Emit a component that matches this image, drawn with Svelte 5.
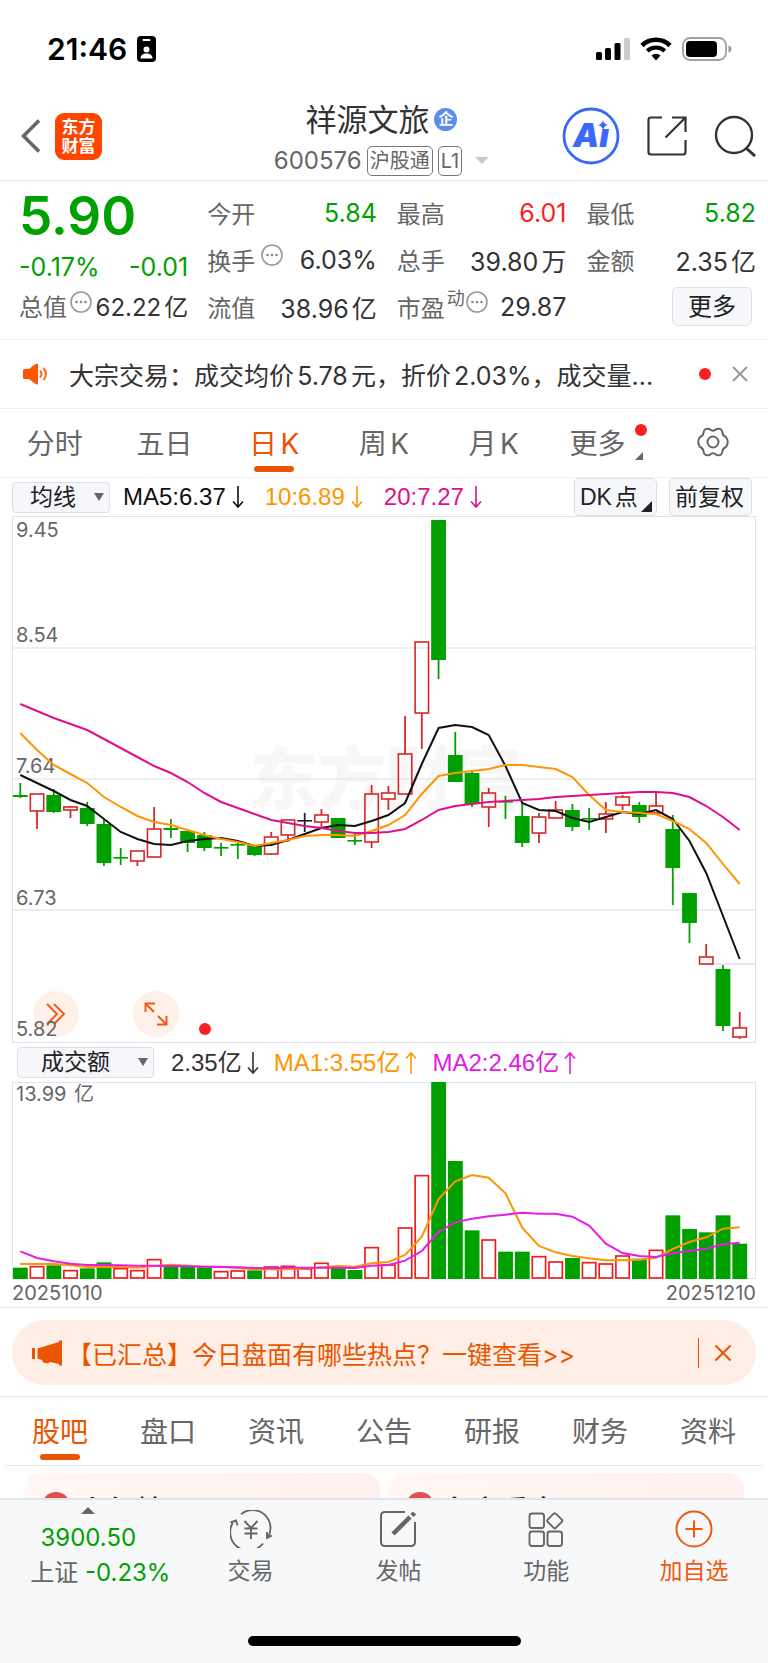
<!-- Stock detail page: quote, daily K chart, volume -->
<script>
  const quotes = [
    { label: '今开', value: '5.84', tone: 'down' },
    { label: '最高', value: '6.01', tone: 'up' },
    { label: '最低', value: '5.82', tone: 'down' },
    { label: '换手', value: '6.03%', info: true },
    { label: '总手', value: '39.80万' },
    { label: '金额', value: '2.35亿' },
    { label: '流值', value: '38.96亿' },
    { label: '市盈', sup: '动', value: '29.87', info: true }
  ];

  const periods = ['分时', '五日', '日K', '周K', '月K'];
  const sections = ['股吧', '盘口', '资讯', '公告', '研报', '财务', '资料'];
  let period = $state('日K');
  let section = $state('股吧');
  let showNotice = $state(true);
  let showBanner = $state(true);

  // colour (g/r/k), high, body top, body bottom, low
  const candles = [
    ['g', 267, 279, 281, 282], ['r', 278, 278, 295, 313], ['g', 273, 279, 296, 297],
    ['r', 290, 291, 294, 302], ['g', 286, 292, 308, 310], ['g', 304, 308, 347, 350],
    ['g', 332, 341, 342, 349], ['r', 335, 335, 345, 350], ['r', 291, 313, 341, 341],
    ['g', 303, 312, 314, 322], ['g', 315, 315, 327, 336], ['g', 316, 319, 332, 335],
    ['g', 327, 331, 332, 340], ['g', 327, 328, 329, 343], ['g', 329, 329, 339, 340],
    ['r', 316, 321, 338, 339], ['r', 304, 304, 319, 326], ['k', 297, 304, 305, 316],
    ['r', 293, 299, 306, 313], ['g', 302, 302, 322, 322], ['g', 318, 324, 325, 329],
    ['r', 269, 278, 326, 332], ['r', 270, 277, 283, 294], ['r', 200, 238, 278, 278],
    ['r', 126, 126, 197, 233], ['g', 4, 4, 144, 163], ['g', 216, 239, 266, 266],
    ['g', 255, 257, 288, 291], ['r', 272, 277, 291, 311], ['g', 280, 285, 286, 303],
    ['g', 287, 300, 327, 331], ['r', 297, 301, 317, 327], ['r', 285, 294, 302, 302],
    ['g', 288, 294, 311, 315], ['g', 292, 302, 303, 314], ['r', 286, 298, 303, 317],
    ['r', 279, 281, 289, 294], ['g', 286, 289, 301, 307], ['r', 276, 290, 297, 297],
    ['g', 299, 313, 352, 389], ['g', 377, 377, 407, 427], ['r', 428, 441, 448, 448],
    ['g', 449, 453, 510, 515], ['r', 496, 512, 521, 523]
  ];
  const ma5 = [259, 267, 275, 284, 290, 303, 316, 323, 328, 329, 325, 323, 322, 325, 330, 329, 324, 318, 312, 309, 310, 305, 299, 287, 248, 212, 209, 211, 219, 250, 287, 294, 295, 302, 306, 301, 296, 298, 294, 303, 325, 357, 400, 443];
  const ma10 = [217, 234, 249, 258, 267, 281, 291, 300, 306, 309, 314, 319, 323, 326, 330, 327, 324, 320, 319, 319, 320, 315, 309, 299, 278, 260, 257, 255, 253, 249, 249, 251, 253, 261, 279, 294, 296, 297, 298, 305, 313, 327, 348, 368];
  const ma20 = [188, 195, 202, 208, 214, 223, 232, 241, 250, 257, 266, 277, 286, 292, 298, 304, 307, 310, 312, 315, 317, 317, 316, 313, 304, 294, 290, 288, 286, 285, 284, 283, 281, 280, 279, 278, 277, 276, 276, 277, 281, 290, 301, 314];

  const volumes = [34, 39, 41, 27, 32, 50, 33, 27, 60, 38, 37, 36, 24, 26, 26, 38, 40, 32, 49, 33, 27, 96, 44, 155, 312, 591, 354, 146, 119, 82, 82, 69, 53, 63, 51, 47, 71, 61, 88, 191, 150, 140, 191, 106];
  // volume colour follows the previous close, not the open
  const volTone = 'grgrggrrrgggrrgrrrrggrrrrgggrggrrgrrrgrggggg';
  const volMa1 = [45, 45, 45, 41, 36, 36, 36, 34, 39, 43, 40, 37, 37, 33, 29, 29, 29, 31, 35, 39, 37, 47, 51, 72, 127, 240, 293, 312, 304, 257, 154, 99, 80, 69, 62, 56, 56, 58, 64, 90, 111, 125, 151, 155];
  const volMa2 = [83, 63, 53, 46, 42, 42, 41, 40, 40, 39, 38, 37, 36, 35, 33, 32, 34, 34, 34, 34, 33, 40, 42, 55, 84, 141, 170, 181, 188, 193, 199, 196, 196, 187, 160, 106, 78, 69, 66, 77, 84, 91, 104, 109];

  const axis = [['9.45', 21], ['8.54', 126], ['7.64', 257], ['6.73', 389], ['5.82', 520]];
  const colors = { g: '#00a000', r: '#d5282c', k: '#222' };

  const cx = (i) => 8.3 + i * 16.73;
  const line = (arr) => arr.map((y, i) => `${cx(i).toFixed(1)},${y}`).join(' ');
  // the volume pane is drawn at three units per price pane unit
  const volLine = (arr) => arr.map((v, i) => `${(cx(i) * 3).toFixed(1)},${591 - v}`).join(' ');
</script>

{#snippet info()}
  <svg class="info" viewBox="0 0 22 22" aria-hidden="true">
    <circle cx="11" cy="11" r="10" fill="none" stroke="#999" stroke-width="1.6" />
    <circle cx="6.5" cy="11" r="1.3" fill="#888" />
    <circle cx="11" cy="11" r="1.3" fill="#888" />
    <circle cx="15.5" cy="11" r="1.3" fill="#888" />
  </svg>
{/snippet}

{#snippet arrow(up)}
  <svg class="arrow" viewBox="0 0 12 24" aria-hidden="true">
    <path d={up ? 'M6 23V2M1 7.5L6 2l5 5.5' : 'M6 1v21M1 16.5L6 22l5-5.5'} fill="none" stroke="currentColor" stroke-width="1.6" />
  </svg>
{/snippet}

<div class="page">
  <div class="status">
    <div class="clock">
      <span>21:46</span>
      <svg width="20" height="26" viewBox="0 0 20 26" aria-hidden="true">
        <rect width="19" height="26" rx="4" fill="#000" />
        <rect x="5.5" y="3" width="8" height="2" rx="1" fill="#fff" />
        <circle cx="9.5" cy="13.5" r="3" fill="#fff" />
        <path d="M3.5 22.5c0-3.5 2.5-5 6-5s6 1.5 6 5z" fill="#fff" />
      </svg>
    </div>
    <div class="signals">
      <svg width="34" height="24" viewBox="0 0 34 24" aria-hidden="true">
        <rect x="0" y="15" width="6" height="8" rx="1.5" />
        <rect x="9" y="11" width="6" height="12" rx="1.5" />
        <rect x="18.5" y="6" width="6" height="17" rx="1.5" />
        <rect x="28" y="1" width="6" height="22" rx="1.5" fill="#ccc" />
      </svg>
      <svg width="32" height="24" viewBox="0 0 32 24" aria-hidden="true">
        <path d="M2 8.5a20 20 0 0 1 28 0" fill="none" stroke="#000" stroke-width="4.6" />
        <path d="M7.3 14a12.5 12.5 0 0 1 17.4 0" fill="none" stroke="#000" stroke-width="4.2" />
        <path d="M11.5 18.5q4.5-3.6 9 0L16 23.5z" />
      </svg>
      <svg width="50" height="24" viewBox="0 0 50 24" aria-hidden="true">
        <rect x="1" y="1" width="43" height="22" rx="7" fill="none" stroke="#a0a0a0" stroke-width="1.8" />
        <rect x="4" y="4" width="31" height="16" rx="4" />
        <path d="M46.5 8.5q3 1 3 3.5t-3 3.5z" fill="#999" />
      </svg>
    </div>
  </div>

  <header>
    <div class="left">
      <button class="icon" aria-label="返回">
        <svg width="20" height="34" viewBox="0 0 20 34"><path d="M18 1.5L2.5 17 18 32.5" fill="none" stroke="#666" stroke-width="3.6" /></svg>
      </button>
      <a class="logo" href="#home">东方<br />财富</a>
    </div>
    <div class="stock">
      <h1>祥源文旅<span class="badge">企</span></h1>
      <div class="code">
        <span>600576</span>
        <span class="tag">沪股通</span>
        <span class="tag">L1</span>
        <i class="caret"></i>
      </div>
    </div>
    <div class="actions">
      <button class="icon" aria-label="智能助手">
        <svg width="58" height="58" viewBox="0 0 58 58">
          <circle cx="29" cy="29" r="27" fill="#fff" stroke="#3a68ff" stroke-width="2.8" />
          <text x="11" y="40" class="ai">Aı</text>
          <path d="M41 13q1 4.2 5 5-4 1-5 5-1-4-5-5 4-.8 5-5z" fill="#3a68ff" />
        </svg>
      </button>
      <button class="icon" aria-label="分享">
        <svg width="42" height="42" viewBox="0 0 42 42" fill="none" stroke="#333" stroke-width="2.2">
          <path d="M16 2.5H5q-2.5 0-2.5 2.5v32q0 2.5 2.5 2.5h32q2.5 0 2.5-2.5V25" />
          <path d="M26 2.5h13.5V17M39.5 2.5l-20 20" />
        </svg>
      </button>
      <button class="icon" aria-label="搜索">
        <svg width="42" height="42" viewBox="0 0 42 42" fill="none" stroke="#333" stroke-width="2.4">
          <circle cx="20" cy="20" r="18" />
          <path d="M32 33l9 8" stroke-width="3" />
        </svg>
      </button>
    </div>
  </header>

  <section class="quote">
    <div class="main down">
      <strong>5.90</strong>
      <p class="pair"><span>-0.17%</span><span>-0.01</span></p>
      <p class="pair total">
        <span class="label">总值</span>{@render info()}<span class="dark">62.22亿</span>
      </p>
    </div>
    <div class="cells">
      {#each quotes as q}
        <div class="cell">
          <span class="label">{q.label}{#if q.sup}<sup>{q.sup}</sup>{/if}{#if q.info}{@render info()}{/if}</span>
          <span class="num {q.tone || 'dark'}">{q.value}</span>
        </div>
      {/each}
      <div class="cell end"><button class="more">更多</button></div>
    </div>
  </section>

  {#if showNotice}
    <section class="notice">
      <svg width="26" height="22" viewBox="0 0 26 22" aria-hidden="true">
        <path d="M1 7.5Q1 6 2.5 6H7l6.5-5q2.5-1.5 2.5 1v18q0 2.500-2.500 1L7 16H2.500Q1 16 1 14.500z" fill="#ff5500" />
        <path d="M18 7.5q3 3.5 0 7M21.5 5q5 6 0 12" fill="none" stroke="#ff6a20" stroke-width="2" />
      </svg>
      <a href="#notice">大宗交易：成交均价5.78元，折价2.03%，成交量...</a>
      <i class="dot"></i>
      <button class="icon" aria-label="关闭公告" onclick={() => (showNotice = false)}>
        <svg width="16" height="16" viewBox="0 0 16 16"><path d="M1 1l14 14M15 1L1 15" stroke="#999" stroke-width="2" /></svg>
      </button>
    </section>
  {/if}

  <nav class="tabs periods">
    {#each periods as p}
      <button class:active={period === p} onclick={() => (period = p)}>{p}</button>
    {/each}
    <button><span class="more-tab">更多<i class="dot"></i><i class="corner"></i></span></button>
    <button aria-label="设置">
      <svg width="32" height="30" viewBox="0 0 32 30" fill="none" stroke="#666" stroke-width="2">
        <path d="M12.5 2Q16 5.5 19.5 2Q25 .5 25.5 6Q26 9 29 10Q32.5 15 29 20Q26 21 25.5 24Q25 29.5 19.5 28Q16 24.5 12.5 28Q7 29.5 6.5 24Q6 21 3 20Q-.5 15 3 10Q6 9 6.5 6Q7 .5 12.5 2z" />
        <circle cx="16" cy="15" r="5.5" />
      </svg>
    </button>
  </nav>

  <div class="legend">
    <label class="pick">
      <select aria-label="主图指标"><option>均线</option><option>BOLL</option></select>
      <i></i>
    </label>
    <span class="ma">MA5:6.37{@render arrow(false)}</span>
    <span class="ma orange">10:6.89{@render arrow(false)}</span>
    <span class="ma pink">20:7.27{@render arrow(false)}</span>
    <div class="opts">
      <button class="opt">DK点<i class="corner"></i></button>
      <button class="opt">前复权</button>
    </div>
  </div>

  <div class="pane">
    <div class="tools">
      <button aria-label="展开">
        <svg width="20" height="22" viewBox="0 0 20 22"><path d="M1 1l10 10L1 21M8 1l10 10L8 21" fill="none" stroke="#f05a10" stroke-width="1.9" /></svg>
      </button>
      <button aria-label="全屏">
        <svg width="24" height="24" viewBox="0 0 24 24"><path d="M1.5 10V1.5H11M1.5 1.5L10 10M22.5 14v8.5H13M22.5 22.5L14 14" fill="none" stroke="#f05a10" stroke-width="1.9" /></svg>
      </button>
      <i class="dot"></i>
    </div>
    <svg class="chart" viewBox="0 0 744 527" role="img" aria-label="日K线">
      <text x="238" y="288" class="watermark">东方财富</text>
      {#each [132, 263, 394] as y}
        <line x1="0" x2="744" y1={y} y2={y} stroke="#e6e9ef" stroke-width="1.5" />
      {/each}
      <line x1={cx(41)} x2="744" y1="448" y2="448" stroke="#dcdfe6" stroke-width="1.3" />
      {#each axis as [label, y]}
        <text x="4" {y} class="axis">{label}</text>
      {/each}
      {#each candles as [c, high, top, bottom, low], i}
        {#if c === 'r'}
          <path d="M{cx(i)} {high}V{top}M{cx(i)} {bottom}V{low}" stroke={colors[c]} stroke-width="1.8" />
          <rect x={cx(i) - 6.7} y={top} width="13.4" height={bottom - top} fill="none" stroke={colors[c]} stroke-width="1.6" />
        {:else}
          <path d="M{cx(i)} {high}V{low}" stroke={colors[c]} stroke-width="1.8" />
          <rect x={cx(i) - 7.4} y={top} width="14.8" height={Math.max(bottom - top, 1.6)} fill={colors[c]} />
        {/if}
      {/each}
      <polyline points={line(ma5)} fill="none" stroke="#111" stroke-width="2" />
      <polyline points={line(ma10)} fill="none" stroke="#ff9500" stroke-width="2" />
      <polyline points={line(ma20)} fill="none" stroke="#e0108a" stroke-width="2" />
    </svg>
  </div>

  <div class="legend volume">
    <label class="pick wide">
      <select aria-label="副图指标"><option>成交额</option><option>MACD</option></select>
      <i></i>
    </label>
    <span class="ma dark">2.35亿{@render arrow(false)}</span>
    <span class="ma orange">MA1:3.55亿{@render arrow(true)}</span>
    <span class="ma purple">MA2:2.46亿{@render arrow(true)}</span>
  </div>

  <div class="pane">
    <svg class="chart" viewBox="0 0 2232 591" role="img" aria-label="成交额">
      <text x="12" y="57" class="axis big">13.99亿</text>
      {#each volumes as v, i}
        {#if volTone[i] === 'g'}
          <rect x={cx(i) * 3 - 22} y={591 - v} width="44.5" height={v} fill="#00a000" />
        {:else}
          <rect x={cx(i) * 3 - 20} y={593 - v} width="40" height={v - 5} fill="none" stroke="#f01c1c" stroke-width="5" />
        {/if}
      {/each}
      <polyline points={volLine(volMa1)} fill="none" stroke="#ff9500" stroke-width="6" />
      <polyline points={volLine(volMa2)} fill="none" stroke="#e81ce8" stroke-width="6" />
    </svg>
  </div>
  <div class="dates"><span>20251010</span><span>20251210</span></div>

  {#if showBanner}
    <div class="banner-wrap">
      <div class="banner">
        <svg width="30" height="26" viewBox="0 0 30 26" fill="#eb5500" aria-hidden="true">
          <rect x="0" y="8" width="3" height="11" />
          <path d="M5.5 8.5L27 2V.5h3v25h-3V24l-9-2-2 1.5-5-1-1-2.5-4.5-1.500z" />
        </svg>
        <a href="#hot">【已汇总】今日盘面有哪些热点？一键查看&gt;&gt;</a>
        <button class="icon" aria-label="关闭横幅" onclick={() => (showBanner = false)}>
          <svg width="18" height="18" viewBox="0 0 18 18"><path d="M1.5 1.5l15 15M16.5 1.5l-15 15" stroke="#eb5500" stroke-width="2" /></svg>
        </button>
      </div>
    </div>
  {/if}

  <nav class="tabs sections">
    {#each sections as s}
      <button class:active={section === s} onclick={() => (section = s)}>{s}</button>
    {/each}
  </nav>

  <div class="cards">
    <a class="card" href="#rank"><i></i>人气榜</a>
    <a class="card" href="#view"><i></i>名家看盘</a>
  </div>

  <footer>
    <div class="bar">
      <a class="index" href="#index">
        <i></i>
        <span class="down">3900.50</span>
        <span class="change">上证 <b class="down">-0.23%</b></span>
      </a>
      <button>
        <svg width="42" height="38" viewBox="0 0 42 38" fill="none" stroke="#666" stroke-width="1.9">
          <path d="M11 4.200A18 18 0 0 1 37.5 28M33 33.5A18 18 0 0 1 4 11M.5 12.5l5.5-2 1.5 5M42 25.5L37 28v-6" />
          <path d="M14.5 11l6.5 7 6.5-7M21 18v11M14.5 18.5h13M14.5 23.5h13" />
        </svg>
        交易
      </button>
      <button>
        <svg width="38" height="38" viewBox="0 0 38 38" fill="none" stroke="#666" stroke-width="2">
          <path d="M26 2H6Q2 2 2 6v26q0 4 4 4h26q4 0 4-4V12" />
          <path d="M14 24L31 7M33 5.5L35.5 3" stroke-width="4.5" />
        </svg>
        发帖
      </button>
      <button>
        <svg width="38" height="38" viewBox="0 0 38 38" fill="none" stroke="#666" stroke-width="1.9">
          <rect x="2.5" y="3.5" width="14.5" height="14.5" rx="2.5" />
          <rect x="2.5" y="21.5" width="14.5" height="14.5" rx="2.5" />
          <rect x="20.5" y="21.5" width="14.5" height="14.5" rx="2.5" />
          <rect x="22" y="5" width="11.5" height="11.5" rx="1.5" transform="rotate(45 27.75 10.75)" />
        </svg>
        功能
      </button>
      <button class="active">
        <svg width="38" height="38" viewBox="0 0 38 38" fill="none" stroke="#f05a10" stroke-width="2">
          <circle cx="19" cy="19" r="17.5" /><path d="M19 10.5v17M10.5 19h17" />
        </svg>
        加自选
      </button>
    </div>
    <div class="home"></div>
  </footer>
</div>

<style>
  :global(body) {
    background: #fff;
  }

  .page {
    display: flex;
    flex-direction: column;
    height: 100vh;
    overflow: hidden;
    font-family: Inter, "Noto Sans CJK SC", sans-serif;
    font-size: 24px;
    color: #666;
    text-autospace: normal;
  }

  .page > * {
    flex-shrink: 0;
    box-sizing: border-box;
  }

  button,
  select {
    font: inherit;
    color: inherit;
    background: none;
    border: none;
    padding: 0;
    margin: 0;
    cursor: pointer;
  }

  a {
    color: inherit;
    text-decoration: none;
  }

  svg {
    display: block;
    flex-shrink: 0;
  }

  p,
  h1 {
    margin: 0;
    font-weight: 400;
  }

  .dot {
    width: 12px;
    height: 12px;
    border-radius: 50%;
    background: #f82020;
  }

  /* status bar */
  .status {
    display: flex;
    justify-content: space-between;
    align-items: center;
    height: 96px;
    padding: 2px 36px 0 47px;
  }

  .clock {
    display: flex;
    align-items: center;
    gap: 10px;
    color: #000;
    font-size: 30px;
    font-weight: 600;
  }

  .signals {
    display: flex;
    gap: 10px;
  }

  /* header */
  header {
    display: grid;
    grid-template-columns: 1fr auto 1fr;
    align-items: center;
    height: 85px;
    padding: 0 12px 4px 21px;
    border-bottom: 1px solid #e4e4e4;
  }

  .left,
  .actions {
    display: flex;
    align-items: center;
    gap: 14px;
  }

  .actions {
    justify-content: flex-end;
    gap: 26px;
  }

  .logo {
    width: 47px;
    height: 47px;
    box-sizing: border-box;
    padding-top: 5px;
    border-radius: 9px;
    background: #ff4400;
    color: #fff;
    font-size: 17px;
    line-height: 19px;
    font-weight: 700;
    text-align: center;
  }

  .stock {
    display: flex;
    flex-direction: column;
    align-items: center;
    gap: 7px;
    padding: 4px 14px 0 0;
  }

  h1 {
    display: flex;
    align-items: center;
    gap: 5px;
    color: #333;
    font-size: 31px;
    line-height: 38px;
  }

  .badge {
    width: 23px;
    height: 23px;
    border-radius: 50%;
    background: #5b8def;
    color: #fff;
    font-size: 15px;
    line-height: 22px;
    font-weight: 700;
    text-align: center;
  }

  .code {
    display: flex;
    align-items: center;
    gap: 5px;
    line-height: 30px;
  }

  .tag {
    padding: 0 2px;
    border: 1px solid #777;
    border-radius: 5px;
    font-size: 20px;
    line-height: 28px;
  }

  .caret {
    margin-left: 8px;
    border: 7px solid transparent;
    border-top-color: #c8c8c8;
    border-bottom: none;
  }

  .ai {
    fill: #3a68ff;
    font-size: 33px;
    font-weight: 900;
    font-style: italic;
  }

  /* quote */
  .quote {
    display: grid;
    grid-template-columns: minmax(0, 169fr) minmax(0, 548fr);
    column-gap: 19px;
    padding: 8px 12px 9px 19px;
    border-bottom: 1px solid #eee;
  }

  .main strong {
    display: block;
    font-size: 53px;
    line-height: 54px;
    font-weight: 600;
  }

  .pair {
    display: flex;
    justify-content: space-between;
    font-size: 25px;
    line-height: 48px;
    white-space: nowrap;
  }

  .total {
    font-size: 24px;
    line-height: 34px;
  }

  .num {
    font-size: 25px;
  }

  .cells {
    display: grid;
    grid-template-columns: repeat(3, minmax(0, 1fr));
    grid-auto-rows: 47px;
    column-gap: 20px;
  }

  .cell {
    display: flex;
    justify-content: space-between;
    align-items: center;
    white-space: nowrap;
  }

  .label {
    display: flex;
    color: #666;
  }

  .cell .info {
    margin: 2px 0 0 6px;
  }

  sup {
    margin-left: 2px;
    font-size: 18px;
    line-height: 20px;
  }

  .cell sup + :global(.info) {
    margin-left: 1px;
  }

  .info {
    width: 22px;
    height: 22px;
  }

  .end {
    justify-content: flex-end;
  }

  .more {
    width: 80px;
    height: 39px;
    margin-right: 4px;
    border: 1px solid #dfe1e6;
    border-radius: 5px;
    background: #f6f7fa;
    color: #222;
    line-height: 36px;
  }

  /* notice */
  .notice {
    display: flex;
    align-items: center;
    height: 69px;
    padding: 0 20px 0 22px;
    border-bottom: 1px solid #eee;
    color: #333;
    font-size: 25px;
  }

  .notice a {
    flex: 1;
    min-width: 0;
    margin: 0 20px 0 21px;
    overflow: hidden;
    text-overflow: ellipsis;
    white-space: nowrap;
  }

  .notice .icon {
    margin-left: 21px;
  }

  /* tabs */
  .tabs {
    display: grid;
    grid-template-columns: repeat(7, 1fr);
    height: 69px;
    font-size: 28px;
  }

  .tabs button {
    display: flex;
    position: relative;
    justify-content: center;
    align-items: center;
    padding-bottom: 2px;
  }

  .tabs .active {
    color: #eb5500;
  }

  .tabs .active::after {
    content: "";
    position: absolute;
    bottom: 5px;
    left: calc(50% - 20px);
    width: 40px;
    height: 6px;
    border-radius: 3px;
    background: #eb5500;
  }

  .periods {
    border-bottom: 1px solid #f0f0f0;
  }

  .more-tab {
    position: relative;
    margin-right: 12px;
  }

  .more-tab .dot {
    position: absolute;
    top: 2px;
    right: -22px;
  }

  .corner {
    position: absolute;
    right: 4px;
    bottom: 3px;
    border-left: 11px solid transparent;
    border-bottom: 11px solid #222;
  }

  .more-tab .corner {
    right: -18px;
    bottom: 2px;
    border-left-width: 8px;
    border-bottom: 8px solid #666;
  }

  .sections {
    margin: 0 6px;
    border-bottom: 1px solid #e8e8ea;
  }

  /* chart toolbar */
  .legend {
    display: flex;
    align-items: center;
    height: 38px;
    padding: 0 16px 0 12px;
    font-family: "Liberation Sans", "Noto Sans CJK SC", sans-serif;
    white-space: nowrap;
  }

  .volume {
    height: 39px;
    padding-left: 17px;
    text-autospace: no-autospace;
  }

  .pick {
    position: relative;
    margin-right: 13px;
  }

  .pick select {
    display: block;
    appearance: none;
    width: 98px;
    height: 31px;
    padding-left: 17px;
    border: 1px solid #dcdfe4;
    border-radius: 4px;
    background: #f6f7fa;
    color: #222;
    font-size: 23px;
    line-height: 29px;
  }

  .wide {
    margin-right: 17px;
  }

  .wide select {
    width: 137px;
    padding-left: 23px;
  }

  .pick i {
    position: absolute;
    top: 11px;
    right: 6px;
    border: 5px solid transparent;
    border-top: 8px solid #666;
    border-bottom: none;
    pointer-events: none;
  }

  .ma {
    display: flex;
    align-items: center;
    gap: 6px;
    margin-right: 21px;
    color: #111;
    line-height: 30px;
  }

  .volume .ma {
    gap: 5px;
    margin-right: 15px;
  }

  .arrow {
    width: 12px;
    height: 24px;
  }

  .opts {
    display: flex;
    gap: 12px;
    margin-left: auto;
  }

  .opt {
    position: relative;
    width: 83px;
    height: 38px;
    border: 1px solid #dcdfe6;
    border-radius: 5px;
    background: #f6f7fa;
    color: #222;
    font-size: 23px;
    line-height: 35px;
    text-align: left;
    padding-left: 5px;
  }

  /* chart */
  .pane {
    position: relative;
    margin: 0 12px;
    outline: 1px solid #e0e3e8;
    outline-offset: -1px;
  }

  .chart {
    position: relative;
    width: 100%;
    height: auto;
    pointer-events: none;
  }

  .tools {
    display: flex;
    position: absolute;
    left: 21px;
    bottom: 6px;
    align-items: center;
    gap: 54px;
  }

  .tools button {
    display: flex;
    justify-content: center;
    align-items: center;
    width: 46px;
    height: 46px;
    border-radius: 50%;
    background: #fff0e9;
  }

  .tools .dot {
    align-self: flex-end;
    margin: 0 0 2px -34px;
  }

  .axis {
    fill: #666;
    font-size: 20px;
  }

  .big {
    font-size: 60px;
  }

  .watermark {
    fill: #f7f7f7;
    font-size: 68px;
    font-weight: 900;
  }

  .dates {
    display: flex;
    justify-content: space-between;
    padding: 0 12px;
    border-bottom: 1px solid #e6e8ea;
    font-size: 20px;
    line-height: 28px;
  }

  /* banner */
  .banner-wrap {
    padding: 12px 12px 11px;
    border-bottom: 1px solid #e4e6ea;
  }

  .banner {
    display: flex;
    align-items: center;
    height: 65px;
    padding: 0 24px 0 20px;
    border-radius: 33px;
    background: #feeee5;
    color: #eb5500;
    font-size: 25px;
  }

  .banner a {
    flex: 1;
    margin-left: 5px;
  }

  .banner button {
    padding: 6px 0 6px 15px;
    border-left: 1px solid #eb5500;
  }

  /* cards */
  .page > .cards {
    display: grid;
    grid-template-columns: 1fr 1fr;
    flex: 1 1 0;
    gap: 8px;
    min-height: 0;
    padding: 7px 24px 0;
    overflow: hidden;
  }

  .card {
    display: flex;
    align-items: flex-start;
    gap: 8px;
    height: 110px;
    box-sizing: border-box;
    padding: 19px 18px 0;
    border-radius: 16px;
    background: linear-gradient(90deg, #fff8f5, #fef1ef);
    color: #222;
    font-size: 29px;
    line-height: 40px;
    font-weight: 500;
  }

  .card i {
    width: 28px;
    height: 28px;
    border-radius: 50%;
    background: #e05050;
  }

  /* bottom bar */
  footer {
    border-top: 2px solid #e2e4e7;
    background: #f7f8fa;
  }

  .bar {
    display: grid;
    grid-template-columns: 23% repeat(4, 1fr);
  }

  .bar button {
    display: flex;
    flex-direction: column;
    align-items: center;
    gap: 6px;
    padding-top: 10px;
    font-size: 23px;
    line-height: 34px;
  }

  .bar .active {
    color: #f05a10;
  }

  .index {
    display: flex;
    flex-direction: column;
    align-items: center;
    line-height: 35px;
    white-space: nowrap;
  }

  .index i {
    margin: 7px 0 6px;
    border: 7px solid transparent;
    border-top: none;
    border-bottom-color: #666;
  }

  .index b {
    font-weight: 400;
  }

  .change {
    padding-left: 24px;
  }

  .home {
    width: 273px;
    height: 10px;
    margin: 46px auto 17px;
    border-radius: 5px;
    background: #000;
  }

  /* tones */
  .down { color: #00a000; }
  .up { color: #fa1e1e; }
  .dark { color: #333; }
  .orange { color: #ff9500; }
  .pink { color: #e0108a; }
  .purple { color: #e01ce0; }
</style>
